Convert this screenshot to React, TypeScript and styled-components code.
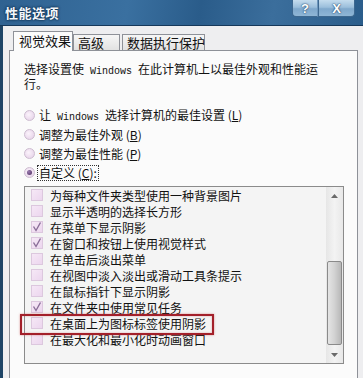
import React from "react";
import styled, { createGlobalStyle } from "styled-components";

const Global = createGlobalStyle`
  html, body { margin: 0; padding: 0; background: #f0f0f0; }
  body { font-family: "Noto Sans CJK SC", "Liberation Sans", sans-serif; }
`;

const Win = styled.div`
  width: 363px;
  height: 378px;
  overflow: hidden;
  display: flex;
  flex-direction: column;
  background: #f0f0f0;
  font-family: "Noto Sans CJK SC", "Liberation Sans", sans-serif;
  font-size: 12px;
  color: #111;
`;

const TitleBar = styled.div`
  height: 26px;
  flex: none;
  display: flex;
  align-items: flex-start;
  justify-content: space-between;
  background: linear-gradient(100deg, #2f6291 0%, #3a70a0 35%, #2a5c8a 55%, #3b6e9c 75%, #2b5d8b 100%);
  border-bottom: 1px solid #16385a;
  box-sizing: border-box;
`;

const Title = styled.div`
  padding: 5px 0 0 5px;
  font-size: 13px;
  font-weight: bold;
  line-height: 16px;
  color: #f4f8fc;
  letter-spacing: 0.5px;
  text-shadow: 0 0 3px #0a2a48, 0 0 2px #0a2a48;
`;

const Buttons = styled.div`
  display: flex;
  margin-right: 8px;
`;

const CapBtn = styled.div<{ $w: number }>`
  width: ${(p) => p.$w}px;
  height: 17px;
  box-sizing: border-box;
  display: flex;
  align-items: center;
  justify-content: center;
  background: linear-gradient(180deg, #c4dcee 0%, #9cbfdc 45%, #7fa8cc 55%, #8fb6d6 100%);
  border: 1px solid #3d6890;
  border-top: none;
  color: #fff;
  font-family: "Liberation Sans", sans-serif;
  font-weight: bold;
  font-size: 13px;
  text-shadow: 0 0 2px #24486c, 0 0 1px #24486c;
  &:first-child { border-bottom-left-radius: 4px; border-right: 1px solid #6e97bd; }
  &:last-child { border-bottom-right-radius: 4px; }
`;

const Body = styled.div`
  flex: 1;
  display: flex;
  border-left: 3px solid #1d4466;
  background: #eeeef0;
  padding: 5px 0 0 6px;
  min-height: 0;
`;

const Dialog = styled.div`
  flex: 1;
  display: flex;
  flex-direction: column;
  padding-right: 5px;
`;

const Tabs = styled.div`
  display: flex;
  align-items: flex-end;
  padding-left: 4px;
  height: 20px;
  position: relative;
  z-index: 1;
  margin-bottom: -1px;
`;

const Tab = styled.div<{ $active?: boolean; $w: number }>`
  width: ${(p) => p.$w}px;
  box-sizing: border-box;
  height: ${(p) => (p.$active ? 20 : 17)}px;
  margin-right: ${(p) => (p.$active ? 0 : 2)}px;
  border: 1px solid #8e9198;
  border-bottom: ${(p) => (p.$active ? "none" : "1px solid #8e9198")};
  background: ${(p) => (p.$active ? "#fbfbfb" : "linear-gradient(180deg, #f6f6f6 0%, #e2e2e2 100%)")};
  font-size: 13px;
  line-height: ${(p) => (p.$active ? 18 : 15)}px;
  padding-left: ${(p) => (p.$active ? 5 : 4)}px;
  color: #111;
  white-space: nowrap;
`;

const Panel = styled.div`
  flex: 1;
  border: 1px solid #8e9198;
  border-bottom: none;
  background: #fbfbfb;
  padding: 11px 0 0 14px;
  display: flex;
  flex-direction: column;
`;

const Intro = styled.div`
  line-height: 14px;
  height: 28px;
  font-size: 12px;
`;

const Latin = styled.span`
  font-family: "Liberation Mono", monospace;
  font-size: 10px;
  line-height: 10px;
  white-space: pre;
`;

const Radios = styled.div`
  display: flex;
  flex-direction: column;
  margin-top: 16px;
`;

const RadioRow = styled.div`
  display: flex;
  align-items: center;
  height: 19px;
  gap: 3px;
`;

const RadioDot = styled.span<{ $on?: boolean }>`
  width: 11px;
  height: 11px;
  border-radius: 50%;
  box-sizing: border-box;
  border: 1px solid #cdbcd0;
  background: radial-gradient(circle at 40% 40%, #fbf3fb 0%, #ead8ec 70%);
  display: flex;
  align-items: center;
  justify-content: center;
  &::after {
    content: "";
    display: ${(p) => (p.$on ? "block" : "none")};
    width: 5px;
    height: 5px;
    border-radius: 50%;
    background: radial-gradient(circle at 35% 35%, #9a7ab0 0%, #4a2a5c 100%);
  }
`;

const Label = styled.span<{ $focus?: boolean }>`
  font-size: 12px;
  line-height: 14px;
  padding: 0 1px;
  outline: ${(p) => (p.$focus ? "1px dotted #333" : "none")};
`;

const ListBox = styled.div`
  margin-top: 4px;
  width: 320px;
  height: 178px;
  box-sizing: border-box;
  border: 1px solid #8b8b8b;
  background: #f4f4f4;
  display: flex;
  position: relative;
`;

const Items = styled.div`
  flex: 1;
  display: flex;
  flex-direction: column;
`;

const Item = styled.div`
  height: 16px;
  display: flex;
  align-items: center;
  padding-left: 6px;
  gap: 7px;
  font-size: 12px;
  white-space: nowrap;
`;

const Check = styled.span`
  width: 12px;
  height: 12px;
  box-sizing: border-box;
  border: 1px solid #dcc8de;
  background: linear-gradient(135deg, #f6e8f6 0%, #ecd6ee 100%);
  display: flex;
  align-items: center;
  justify-content: center;
  flex: none;
`;

const Scroll = styled.div`
  width: 17px;
  display: flex;
  flex-direction: column;
  align-items: center;
  background: linear-gradient(90deg, #e6e6e6 0%, #f3f3f3 50%, #e8e8e8 100%);
`;

const Arrow = styled.div`
  height: 17px;
  width: 17px;
  display: flex;
  align-items: center;
  justify-content: center;
`;

const Track = styled.div`
  flex: 1;
  width: 100%;
  display: flex;
  flex-direction: column;
  justify-content: flex-end;
`;

const Thumb = styled.div`
  height: 84px;
  margin: 0 1px 1px 1px;
  box-sizing: border-box;
  border: 1px solid #8a8a8a;
  border-radius: 2px;
  background: linear-gradient(90deg, #e4e4e4 0%, #d2d2d2 50%, #b8b8b8 100%);
`;

const Highlight = styled.div`
  position: absolute;
  left: -5px;
  top: 127px;
  width: 194px;
  height: 21px;
  box-sizing: border-box;
  border: 2px solid #a3202a;
  box-shadow: 0 0 2px rgba(200, 80, 80, 0.6), inset 0 0 2px rgba(200, 80, 80, 0.5);
  pointer-events: none;
`;

const Tick = () => (
  <svg width="10" height="10" viewBox="0 0 10 10">
    <path d="M1.5 4.5 L4 8.5 L8.5 0.5" fill="none" stroke="#8a6e98" strokeWidth="1.4" />
  </svg>
);

const items: [string, boolean][] = [
  ["为每种文件夹类型使用一种背景图片", false],
  ["显示半透明的选择长方形", false],
  ["在菜单下显示阴影", true],
  ["在窗口和按钮上使用视觉样式", true],
  ["在单击后淡出菜单", false],
  ["在视图中淡入淡出或滑动工具条提示", false],
  ["在鼠标指针下显示阴影", false],
  ["在文件夹中使用常见任务", true],
  ["在桌面上为图标标签使用阴影", false],
  ["在最大化和最小化时动画窗口", false],
];

export default function App() {
  return (
    <Win>
      <Global />
      <TitleBar>
        <Title>性能选项</Title>
        <Buttons>
          <CapBtn $w={26}>?</CapBtn>
          <CapBtn $w={37}>X</CapBtn>
        </Buttons>
      </TitleBar>
      <Body>
        <Dialog>
          <Tabs>
            <Tab $active $w={60}>视觉效果</Tab>
            <Tab $w={47}>高级</Tab>
            <Tab $w={83}>数据执行保护</Tab>
          </Tabs>
          <Panel>
            <Intro>
              选择设置使<Latin> Windows </Latin>在此计算机上以最佳外观和性能运
              <br />
              行。
            </Intro>
            <Radios>
              <RadioRow>
                <RadioDot />
                <Label>让<Latin> Windows </Latin>选择计算机的最佳设置 (<u>L</u>)</Label>
              </RadioRow>
              <RadioRow>
                <RadioDot />
                <Label>调整为最佳外观 (<u>B</u>)</Label>
              </RadioRow>
              <RadioRow>
                <RadioDot />
                <Label>调整为最佳性能 (<u>P</u>)</Label>
              </RadioRow>
              <RadioRow>
                <RadioDot $on />
                <Label $focus>自定义 (<u>C</u>):</Label>
              </RadioRow>
            </Radios>
            <ListBox>
              <Items>
                {items.map(([t, c]) => (
                  <Item key={t}>
                    <Check>{c && <Tick />}</Check>
                    {t}
                  </Item>
                ))}
              </Items>
              <Scroll>
                <Arrow>
                  <svg width="7" height="4" viewBox="0 0 7 4"><path d="M0 4 L3.5 0 L7 4 Z" fill="#6a6a6a" /></svg>
                </Arrow>
                <Track>
                  <Thumb />
                </Track>
                <Arrow>
                  <svg width="7" height="4" viewBox="0 0 7 4"><path d="M0 0 L3.5 4 L7 0 Z" fill="#6a6a6a" /></svg>
                </Arrow>
              </Scroll>
              <Highlight />
            </ListBox>
          </Panel>
        </Dialog>
      </Body>
    </Win>
  );
}
